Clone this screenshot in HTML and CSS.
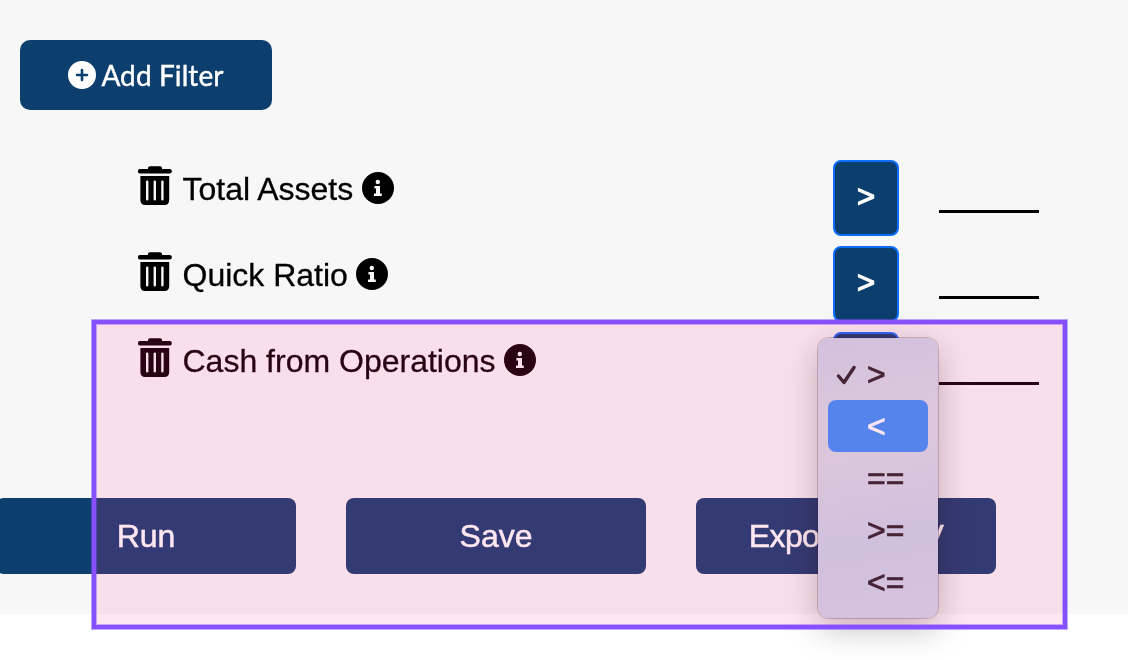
FILE: index.html
```
<!DOCTYPE html>
<html lang="en">
<head>
	<meta charset="utf-8">
	<title>Stock Screener</title>
	<link rel="stylesheet" href="styles.css">
</head>
<body>

<!-- Icon shapes -->
<svg class="sprites" width="0" height="0">
	<symbol id="trash" viewBox="0 0 34 40">
		<path d="M10 3 V2 Q10 .3 12 .3 H22 Q24 .3 24 2 V3 H31.6 A2.2 2.2 0 0 1 31.6 7.6 H2.2 A2.2 2.2 0 0 1 2.2 3 Z"/>
		<path fill-rule="evenodd" d="M2.4 10 H31.2 V34 Q31.2 39 26.4 39 H7.2 Q2.4 39 2.4 34 Z
			M8 15.6 V33.2 A1.2 1.2 0 0 0 10.4 33.2 V15.6 A1.2 1.2 0 0 0 8 15.6 Z
			M15.6 15.6 V33.2 A1.2 1.2 0 0 0 18 33.2 V15.6 A1.2 1.2 0 0 0 15.6 15.6 Z
			M23.2 15.6 V33.2 A1.2 1.2 0 0 0 25.6 33.2 V15.6 A1.2 1.2 0 0 0 23.2 15.6 Z"/>
	</symbol>
	<symbol id="info" viewBox="0 0 32 32">
		<path fill-rule="evenodd" d="M16 0 A16 16 0 1 1 16 32 A16 16 0 1 1 16 0 Z
			M13.6 10 A2.2 2.2 0 1 0 18 10 A2.2 2.2 0 1 0 13.6 10 Z
			M12.4 14 V16.6 H14 V21.6 H12 V24 H19.8 V21.6 H18 V14 Z"/>
	</symbol>
	<symbol id="plus" viewBox="0 0 28 28">
		<path fill-rule="evenodd" d="M14 0 A14 14 0 1 1 14 28 A14 14 0 1 1 14 0 Z
			M12.7 9 V12.7 H9 A1.3 1.3 0 0 0 9 15.3 H12.7 V19 A1.3 1.3 0 0 0 15.3 19 V15.3 H19 A1.3 1.3 0 0 0 19 12.7 H15.3 V9 A1.3 1.3 0 0 0 12.7 9 Z"/>
	</symbol>
</svg>

<div class="screener">
	<button class="add-filter"><svg class="plus-icon"><use href="#plus"/></svg>Add Filter</button>

	<div class="filters">
		<div class="filter">
			<svg class="trash-icon"><use href="#trash"/></svg>
			<span class="filter-name">Total Assets</span>
			<svg class="info-icon"><use href="#info"/></svg>
			<div class="operator">&gt;</div>
			<div class="value"></div>
		</div>
		<div class="filter">
			<svg class="trash-icon"><use href="#trash"/></svg>
			<span class="filter-name">Quick Ratio</span>
			<svg class="info-icon"><use href="#info"/></svg>
			<div class="operator">&gt;</div>
			<div class="value"></div>
		</div>
		<div class="filter">
			<svg class="trash-icon"><use href="#trash"/></svg>
			<span class="filter-name">Cash from Operations</span>
			<svg class="info-icon"><use href="#info"/></svg>
			<div class="operator"></div>
			<div class="value"></div>
		</div>
	</div>

	<div class="actions">
		<button class="action">Run</button>
		<button class="action">Save</button>
		<button class="action export">Export to CSV</button>
	</div>
</div>

<!-- Operator menu, opened on the last filter -->
<div class="menu">
	<div class="menu-item"><svg class="check" viewBox="0 0 20 20"><path d="M2.5 11 L8 17.5 L18 2.5"/></svg>&gt;</div>
	<div class="menu-item selected">&lt;</div>
	<div class="menu-item">==</div>
	<div class="menu-item">&gt;=</div>
	<div class="menu-item">&lt;=</div>
</div>

<div class="marked tint"></div>
<div class="marked glow"></div>
<div class="marked frame"></div>

</body>
</html>
```

FILE: styles.css
```
:root {
	--navy: #0c3e6e;
}

* {
	box-sizing: border-box;
}

body {
	margin: 0;
	height: 660px;
	overflow: hidden;
	position: relative;
	background: white;
	color: black;
	font-family: "Liberation Sans", Arial, sans-serif;
	font-size: 32px;
}

button {
	border: none;
	padding: 0;
	color: white;
	background: var(--navy);
}

.sprites {
	position: absolute;
}

.screener {
	height: 614px;
	padding-top: 40px;
	background: #f7f7f7;
}

.add-filter {
	display: flex;
	align-items: center;
	justify-content: center;
	gap: 5px;
	width: 252px;
	height: 70px;
	margin-left: 20px;
	border-radius: 10px;
	font-family: Lato, sans-serif;
	font-size: 28px;
	letter-spacing: 0.1px;
	-webkit-text-stroke: 0.4px;
}

.plus-icon {
	width: 28px;
	height: 28px;
	fill: white;
	stroke: none;
}

/* One line per filter */
.filters {
	margin: 50px 89px 0 138px;
}

.filter {
	display: flex;
	align-items: flex-start;
	height: 76px;
	margin-bottom: 10px;
}

.trash-icon {
	width: 34px;
	height: 40px;
	margin-top: 6px;
}

.filter-name {
	margin: 11px 8.5px 0 10.5px;
	line-height: 37px;
	-webkit-text-stroke: 0.3px;
}

.info-icon {
	width: 32px;
	height: 32px;
	margin-top: 12px;
}

.operator {
	width: 66px;
	height: 76px;
	margin-left: auto;
	border: 2px solid #0d6efd;
	border-radius: 8px;
	background: var(--navy);
	color: white;
	font-size: 31px;
	line-height: 70px;
	text-align: center;
	-webkit-text-stroke: 1.2px;
}

.value {
	width: 100px;
	height: 53px;
	margin-left: 40px;
	border-bottom: 3px solid black;
}

.actions {
	display: flex;
	gap: 50px;
	margin: 90px 0 0 -4px;
}

.action {
	width: 300px;
	height: 76px;
	border-radius: 8px;
	font-family: inherit;
	font-size: 32px;
	-webkit-text-stroke: 0.5px;
}

.export {
	letter-spacing: -0.65px;
}

/* Dropdown */
.menu {
	position: absolute;
	left: 818px;
	top: 338px;
	width: 120px;
	height: 280px;
	padding: 10px;
	border-radius: 11px;
	background: linear-gradient(170deg, #c8d4e8 0%, #d4dae7 26%, #d4dae7 42%, #c6d3e8 70%, #cdd6e9 100%);
	box-shadow: 0 0 0 1px rgba(0, 0, 0, 0.2), 0 10px 34px rgba(0, 0, 0, 0.26);
}

.menu-item {
	position: relative;
	height: 52px;
	padding-left: 39px;
	border-radius: 8px;
	line-height: 52px;
	color: #232327;
	-webkit-text-stroke: 0.7px;
}

.selected {
	background: #3392f9;
	color: white;
}

.check {
	position: absolute;
	left: 8px;
	top: 17px;
	width: 20px;
	height: 20px;
	fill: none;
	stroke: #232327;
	stroke-width: 3.4;
	stroke-linecap: round;
	stroke-linejoin: round;
}

/* Marked area */
.marked {
	position: absolute;
	left: 92px;
	top: 320px;
	width: 975px;
	height: 309px;
}

.tint {
	background: #ffe7f0;
	mix-blend-mode: multiply;
}

.glow {
	background: #2a0313;
	mix-blend-mode: screen;
}

.frame {
	border: 4px solid #8650ff;
	box-shadow: 0 0 0 1px rgba(134, 80, 255, 0.5), inset 0 0 0 1px rgba(134, 80, 255, 0.45);
}
```
